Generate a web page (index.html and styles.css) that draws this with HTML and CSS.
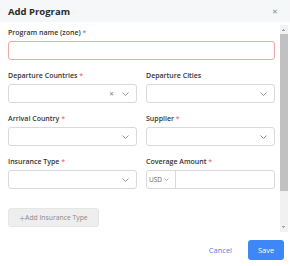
FILE: index.html
```html
<!DOCTYPE html>
<html>
<head>
    <link rel="stylesheet" href="styles.css">
</head>
<body>
<div class="modal">
    <div class="modal-header">
        <span class="title">Add Program</span>
        <span class="close">&#x2715;</span>
    </div>
    <div class="modal-body">
        <div class="form">
            <div class="field">
                <label>Program name (zone) <span class="req">*</span></label>
                <div class="input error"></div>
            </div>
            <div class="row">
                <div class="field">
                    <label>Departure Countries <span class="req">*</span></label>
                    <div class="input select">
                        <span class="clear">&#x2715;</span>
                        <svg class="chev" width="7" height="4" viewBox="0 0 7 4"><polyline points="0.5,0.5 3.5,3.5 6.5,0.5" fill="none" stroke="#8a8a8a" stroke-width="0.9"/></svg>
                    </div>
                </div>
                <div class="field">
                    <label>Departure Cities</label>
                    <div class="input select">
                        <svg class="chev" width="7" height="4" viewBox="0 0 7 4"><polyline points="0.5,0.5 3.5,3.5 6.5,0.5" fill="none" stroke="#8a8a8a" stroke-width="0.9"/></svg>
                    </div>
                </div>
            </div>
            <div class="row">
                <div class="field">
                    <label>Arrival Country <span class="req">*</span></label>
                    <div class="input select">
                        <svg class="chev" width="7" height="4" viewBox="0 0 7 4"><polyline points="0.5,0.5 3.5,3.5 6.5,0.5" fill="none" stroke="#8a8a8a" stroke-width="0.9"/></svg>
                    </div>
                </div>
                <div class="field">
                    <label>Supplier <span class="req">*</span></label>
                    <div class="input select">
                        <svg class="chev" width="7" height="4" viewBox="0 0 7 4"><polyline points="0.5,0.5 3.5,3.5 6.5,0.5" fill="none" stroke="#8a8a8a" stroke-width="0.9"/></svg>
                    </div>
                </div>
            </div>
            <div class="row">
                <div class="field">
                    <label>Insurance Type <span class="req">*</span></label>
                    <div class="input select">
                        <svg class="chev" width="7" height="4" viewBox="0 0 7 4"><polyline points="0.5,0.5 3.5,3.5 6.5,0.5" fill="none" stroke="#8a8a8a" stroke-width="0.9"/></svg>
                    </div>
                </div>
                <div class="field">
                    <label>Coverage Amount <span class="req">*</span></label>
                    <div class="input amount">
                        <span class="currency">USD
                            <svg width="5" height="3" viewBox="0 0 5 3"><polyline points="0.5,0.5 2.5,2.5 4.5,0.5" fill="none" stroke="#9a9a9a" stroke-width="0.8"/></svg>
                        </span>
                    </div>
                </div>
            </div>
            <button class="add-btn"><span class="plus">+</span>Add Insurance Type</button>
        </div>
        <div class="scrollbar">
            <div class="sb-btn up"></div>
            <div class="sb-thumb"></div>
            <div class="sb-space"></div>
            <div class="sb-btn down"></div>
        </div>
    </div>
    <div class="modal-footer">
        <span class="cancel">Cancel</span>
        <button class="save">Save</button>
    </div>
</div>
</body>
</html>
```

FILE: styles.css
```css
body {
    margin: 0;
    background-color: #ffffff;
    font-family: "Open Sans", "Liberation Sans", sans-serif;
    color: #333;
}
.modal {
    width: 290px;
    height: 266px;
    display: flex;
    flex-direction: column;
}
.modal-header {
    height: 22px;
    flex: none;
    background-color: #f6f7f9;
    display: flex;
    align-items: center;
    justify-content: space-between;
    padding: 0 12px 0 8px;
}
.title {
    font-size: 9.5px;
    font-weight: 700;
    color: #2b2b2b;
}
.close {
    font-size: 7px;
    color: #888;
}
.modal-body {
    height: 211px;
    flex: none;
    display: flex;
}
.form {
    flex: 1;
    min-width: 0;
    overflow: hidden;
    padding: 6px 5px 0 8px;
}
.scrollbar {
    width: 8px;
    height: 207px;
    margin: 3px 2px 0 0;
    background: #f1f1f1;
    display: flex;
    flex-direction: column;
}
.sb-btn {
    height: 9px;
    flex: none;
    background-repeat: no-repeat;
    background-size: 2px 2px, 2px 2px;
}
.sb-btn.up {
    background-image: linear-gradient(to top left, #a3a3a3 50%, transparent 50%), linear-gradient(to top right, #a3a3a3 50%, transparent 50%);
    background-position: 2px 4px, 4px 4px;
}
.sb-btn.down {
    background-image: linear-gradient(to bottom left, #a3a3a3 50%, transparent 50%), linear-gradient(to bottom right, #a3a3a3 50%, transparent 50%);
    background-position: 2px 3px, 4px 3px;
}
.sb-thumb {
    height: 157px;
    flex: none;
    background: #c1c1c1;
}
.sb-space {
    flex: 1;
}
.row {
    display: flex;
    gap: 9px;
}
.row .field {
    flex: 1;
    min-width: 0;
}
.field {
    margin-bottom: 11px;
}
label {
    display: block;
    font-size: 7px;
    font-weight: 600;
    line-height: 10px;
    margin-bottom: 3px;
    color: #333;
}
.req {
    color: #f0737a;
}
.input {
    height: 19px;
    box-sizing: border-box;
    border: 1px solid #d9d9d9;
    border-radius: 3px;
    background: #fff;
}
.input.error {
    border-color: #f4a7a7;
}
.select {
    display: flex;
    align-items: center;
    justify-content: flex-end;
    padding-right: 7px;
    gap: 8px;
}
.clear {
    font-size: 6px;
    color: #777;
}
.amount {
    display: flex;
}
.currency {
    width: 29px;
    border-right: 1px solid #d9d9d9;
    font-size: 6.5px;
    color: #666;
    display: flex;
    align-items: center;
    gap: 2px;
    padding-left: 2px;
    box-sizing: border-box;
}
.add-btn {
    margin-top: 8px;
    height: 19px;
    width: 91px;
    padding: 0;
    border: 1px solid #e6e6e6;
    border-radius: 3px;
    background: #eeeeee;
    font-family: inherit;
    font-size: 6.8px;
    color: #8a8a8a;
    display: flex;
    align-items: center;
    justify-content: center;
}
.plus {
    font-size: 10px;
    font-weight: 300;
    line-height: 10px;
}
.modal-footer {
    flex: 1;
    display: flex;
    align-items: center;
    justify-content: flex-end;
    gap: 16px;
    padding-right: 6px;
}
.cancel {
    font-size: 7.5px;
    color: #5b7de8;
}
.save {
    width: 36px;
    height: 20px;
    border: none;
    border-radius: 3px;
    background: #3d88f6;
    color: #fff;
    font-family: inherit;
    font-size: 7.5px;
    padding: 0;
}
```
